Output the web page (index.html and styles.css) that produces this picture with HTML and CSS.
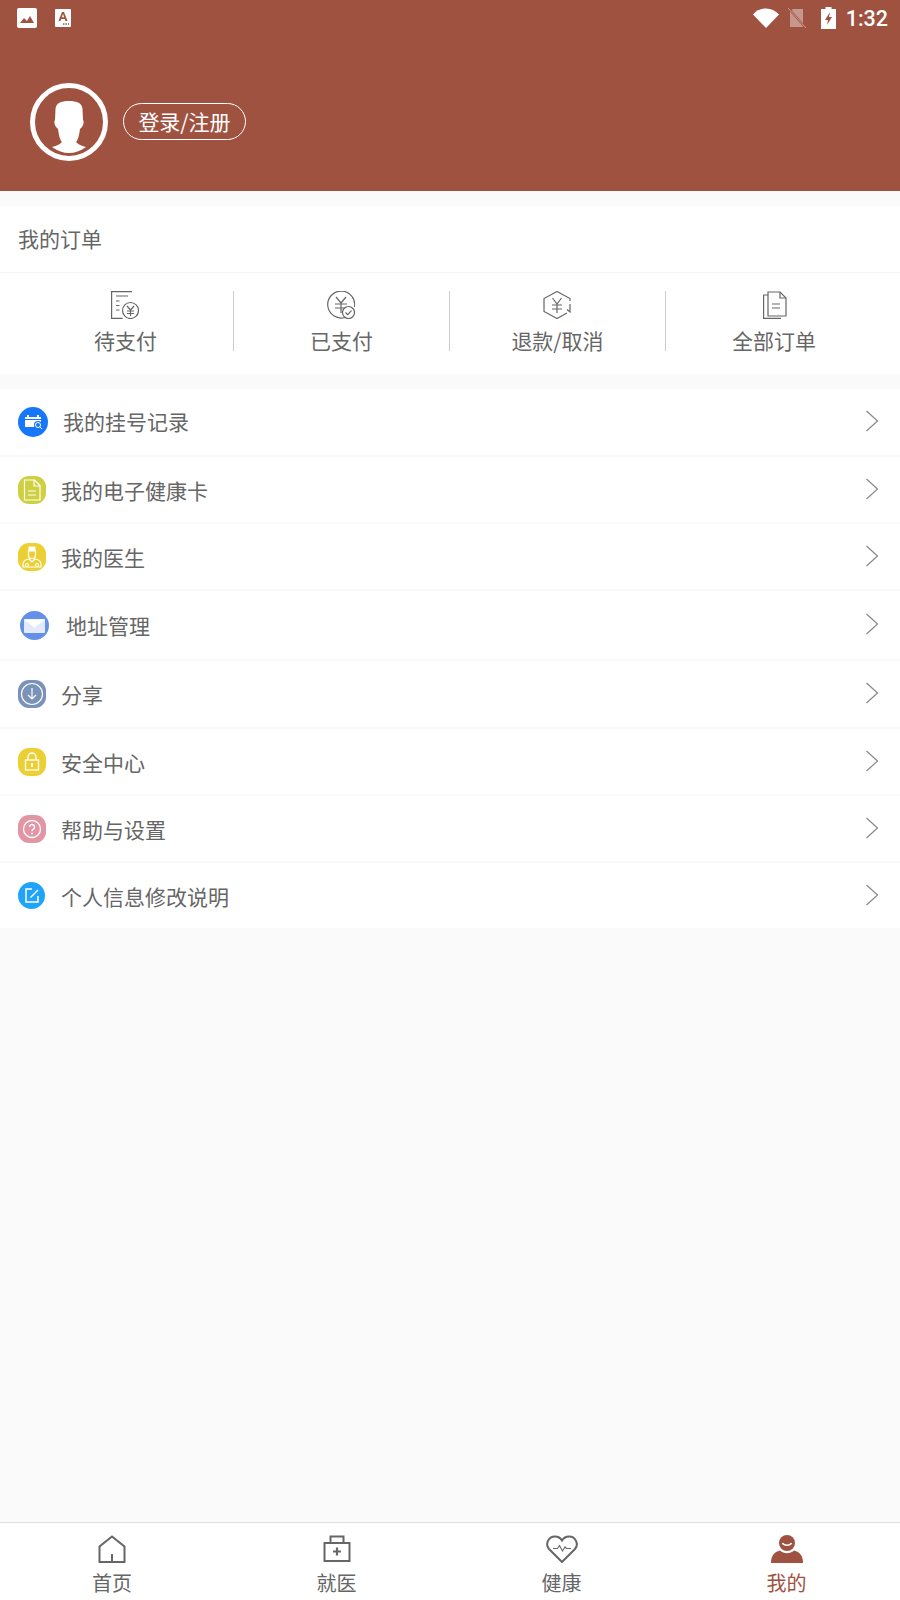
FILE: index.html
```html
<!DOCTYPE html>
<html lang="zh-CN">
<head>
    <meta charset="UTF-8">
    <title>我的</title>
    <link rel="stylesheet" href="styles.css">
</head>
<body class="page">
<header class="header">
    <div class="status-bar">
        <svg class="status-image" viewBox="0 0 20 20"><rect width="20" height="20" rx="2" fill="#fff"/><path d="M3 15l4-5 3 3 3-5 4 7z" fill="#a05241"/></svg>
        <svg class="status-font" viewBox="0 0 16 18"><rect width="16" height="18" rx="1" fill="#fff"/><path d="M3.500 12L7 3h2l3.500 9h-2l-.7-2H6.200l-.7 2zM6.800 8.300h2.400L8 5z" fill="#a05241"/><path d="M8 15h1.500M10.500 15H12M13 15h1" stroke="#a05241" stroke-width="1.500"/></svg>
        <span class="status-spacer"></span>
        <svg class="status-wifi" viewBox="0 0 26 20"><path d="M0 6.500C3.500 2.500 8 .5 13 .5s9.500 2 13 6L13 20z" fill="#fff"/></svg>
        <svg class="status-sim" viewBox="0 0 18 20"><path d="M2 3v16h13V1H5z" fill="#fff" opacity=".4"/><path d="M1 1l16 18" stroke="#a05241" stroke-width="2"/><path d="M0 0l18 20" stroke="#fff" stroke-width="1" opacity=".4"/></svg>
        <svg class="status-battery" viewBox="0 0 15 22"><path d="M4.500 0h6v2H15v20H0V2h4.500z" fill="#fff"/><path d="M9 5L4 13h3l-1 5 5-8H8z" fill="#a05241"/></svg>
        <span class="status-time">1:32</span>
    </div>
    <div class="profile">
        <svg class="avatar" viewBox="0 0 78 78">
            <circle cx="39" cy="39" r="36.500" fill="none" stroke="#fff" stroke-width="5"/>
            <path d="M39 18C47 18 52 20 52.500 26L53 37C54 38 54 41 52 44L50 46C49 53 48 57 46 59C49 62 52 63 56 64C50 68 45 70 39 70C33 70 28 68 22 64C26 63 29 62 32 59C30 57 29 53 28 46L26 44C24 41 24 38 25 37L25.500 26C26 20 31 18 39 18Z" fill="#fff"/>
        </svg>
        <a class="login-btn">登录/注册</a>
    </div>
</header>

<section class="orders">
    <div class="orders-title">我的订单</div>
    <div class="orders-row">
        <div class="order-item">
            <svg class="order-icon" viewBox="0 0 28 28" fill="none" stroke="#666" stroke-width="1.200">
                <path d="M21 .6H.6v26.800h11"/><path d="M5 5h12M5 10h3.500M5 14.500h3.500M5 19h3.500"/>
                <circle cx="19.500" cy="19.500" r="8"/><path d="M16 15l3.500 4 3.500-4M19.500 19v6M16 20h7M16 22.500h7"/>
            </svg>
            <span class="order-label">待支付</span>
        </div>
        <div class="order-item">
            <svg class="order-icon" viewBox="0 0 28 28" fill="none" stroke="#666" stroke-width="1.200">
                <path d="M18 26.500A13.500 13.500 0 1 1 27.500 16"/>
                <path d="M9 6l5 6 5-6M14 12v10M8 13h12M8 17h12"/>
                <circle cx="21.500" cy="21.500" r="6" fill="#fff"/><path d="M18.500 21.500l2.200 2.200 3.800-4"/>
            </svg>
            <span class="order-label">已支付</span>
        </div>
        <div class="order-item">
            <svg class="order-icon" viewBox="0 0 28 28" fill="none" stroke="#666" stroke-width="1.200">
                <path d="M27 10V7.500L14 .5 1 7.500v13l13 7 10-5.500"/>
                <path d="M27 13v8l-3-2.500"/>
                <path d="M9.500 7l4.500 6 4.500-6M14 13v9M9 14h10M9 18h10"/>
            </svg>
            <span class="order-label">退款/取消</span>
        </div>
        <div class="order-item order-item-last">
            <svg class="order-icon" viewBox="0 0 28 28" fill="none" stroke="#666" stroke-width="1.200">
                <path d="M9 1h12l6 6v18H9z"/><path d="M21 1v6h6"/>
                <path d="M9 4H4.600v23.400H22"/>
                <path d="M13 13h8M13 17h8"/>
            </svg>
            <span class="order-label">全部订单</span>
        </div>
    </div>
</section>

<section class="menu">
    <a class="menu-row menu-row-mid">
        <svg class="menu-icon menu-icon-lg" viewBox="0 0 30 30"><circle cx="15" cy="15" r="15" fill="#1677fa"/><path d="M7 10h16v10H7z" fill="#fff"/><path d="M10 8v3M20 8v3" stroke="#fff" stroke-width="2"/><path d="M7 12.500h16" stroke="#1677fa"/><circle cx="20" cy="18" r="4" fill="#1677fa"/><circle cx="20" cy="18" r="2.500" fill="none" stroke="#fff"/><path d="M22 20l2 2" stroke="#fff"/></svg>
        <span class="menu-text menu-text-first">我的挂号记录</span>
        <svg class="chevron" viewBox="0 0 14 22"><path d="M1.500 1l11 10-11 10" fill="none" stroke="#888" stroke-width="1.200"/></svg>
    </a>
    <a class="menu-row">
        <svg class="menu-icon" viewBox="0 0 28 28"><rect width="28" height="28" rx="11" fill="#cfd03f"/><g fill="none" stroke="#fff" stroke-width="1.200"><path d="M6.500 4h10L22 9.500V24H6.500z"/><path d="M16 4v6h6M10 15h8M10 19h8"/></g></svg>
        <span class="menu-text">我的电子健康卡</span>
        <svg class="chevron" viewBox="0 0 14 22"><path d="M1.500 1l11 10-11 10" fill="none" stroke="#888" stroke-width="1.200"/></svg>
    </a>
    <a class="menu-row">
        <svg class="menu-icon" viewBox="0 0 28 28"><rect width="28" height="28" rx="11" fill="#ecd033"/><g fill="none" stroke="#fff" stroke-width="1.200"><path d="M10.500 8v4a3.500 3.500 0 0 0 7 0V8z"/><path d="M5 24v-3c0-3 3-4.500 6-5l3 3 3-3c3 .5 6 2 6 5v3z"/><circle cx="9" cy="22" r="1.500"/><circle cx="19" cy="22" r="1.500"/></g><path d="M10.500 3.500h7V8h-7z" fill="#fff"/></svg>
        <span class="menu-text">我的医生</span>
        <svg class="chevron" viewBox="0 0 14 22"><path d="M1.500 1l11 10-11 10" fill="none" stroke="#888" stroke-width="1.200"/></svg>
    </a>
    <a class="menu-row menu-row-tall">
        <svg class="menu-icon menu-icon-mail" viewBox="0 0 29 29"><circle cx="14.500" cy="14.500" r="14.500" fill="#6590e8"/><rect x="4" y="8" width="21" height="14" rx="1" fill="#e3eafb"/><path d="M4 8.500l10.500 8 10.500-8z" fill="#fff"/></svg>
        <span class="menu-text menu-text-mail">地址管理</span>
        <svg class="chevron" viewBox="0 0 14 22"><path d="M1.500 1l11 10-11 10" fill="none" stroke="#888" stroke-width="1.200"/></svg>
    </a>
    <a class="menu-row menu-row-mid">
        <svg class="menu-icon" viewBox="0 0 28 28"><rect width="28" height="28" rx="11" fill="#7a91b8"/><g fill="none" stroke="#fff" stroke-width="1.200"><circle cx="14" cy="14" r="10.500"/><path d="M14 8v11M10 15l4 4 4-4"/></g></svg>
        <span class="menu-text">分享</span>
        <svg class="chevron" viewBox="0 0 14 22"><path d="M1.500 1l11 10-11 10" fill="none" stroke="#888" stroke-width="1.200"/></svg>
    </a>
    <a class="menu-row">
        <svg class="menu-icon" viewBox="0 0 28 28"><rect width="28" height="28" rx="11" fill="#ecd033"/><g fill="none" stroke="#fff" stroke-width="1.300"><rect x="7.500" y="12" width="13" height="10"/><path d="M10 12V9a4 4 0 0 1 8 0v3"/></g><rect x="13" y="15" width="2" height="4" fill="#fff"/></svg>
        <span class="menu-text">安全中心</span>
        <svg class="chevron" viewBox="0 0 14 22"><path d="M1.500 1l11 10-11 10" fill="none" stroke="#888" stroke-width="1.200"/></svg>
    </a>
    <a class="menu-row">
        <svg class="menu-icon" viewBox="0 0 28 28"><rect width="28" height="28" rx="11" fill="#e295a5"/><circle cx="14" cy="14" r="8.500" fill="none" stroke="#fff" stroke-width="1.300"/><path d="M11.500 12a2.500 2.500 0 1 1 4 2c-1 .7-1.500 1.200-1.500 2.200" fill="none" stroke="#fff" stroke-width="1.500"/><circle cx="14" cy="18.500" r="1" fill="#fff"/></svg>
        <span class="menu-text">帮助与设置</span>
        <svg class="chevron" viewBox="0 0 14 22"><path d="M1.500 1l11 10-11 10" fill="none" stroke="#888" stroke-width="1.200"/></svg>
    </a>
    <a class="menu-row menu-row-last">
        <svg class="menu-icon menu-icon-edit" viewBox="0 0 27 27"><circle cx="13.500" cy="13.500" r="13.500" fill="#1fa3fb"/><g fill="none" stroke="#fff" stroke-width="1.500"><path d="M14 7H8v13h12v-6"/><path d="M12.500 15.500L20 8"/></g></svg>
        <span class="menu-text menu-text-edit">个人信息修改说明</span>
        <svg class="chevron" viewBox="0 0 14 22"><path d="M1.500 1l11 10-11 10" fill="none" stroke="#888" stroke-width="1.200"/></svg>
    </a>
</section>

<div class="spacer"></div>

<nav class="tabbar">
    <a class="tab">
        <svg class="tab-icon" viewBox="0 0 28 28" fill="none" stroke="#666" stroke-width="2"><path d="M14 1.500L1.500 11.500V27h25V11.500zM14 19v8"/></svg>
        <span>首页</span>
    </a>
    <a class="tab">
        <svg class="tab-icon" viewBox="0 0 28 28" fill="none" stroke="#666" stroke-width="2"><path d="M1.500 8h25v18h-25zM7.500 8V1.500h13V8"/><path d="M14 12.500v8M10 16.500h8" stroke-width="2.200"/></svg>
        <span>就医</span>
    </a>
    <a class="tab">
        <svg class="tab-icon tab-icon-wide" viewBox="0 0 32 28" fill="none" stroke="#666" stroke-width="2"><path d="M16 27L3 14C-1 9.500 2 1.500 9 1.500c3 0 5.500 1.500 7 4 1.500-2.500 4-4 7-4 7 0 10 8 6 12.500z"/><path d="M7 13.500h4.500l2-3 3 5.500 2.500-4 1.500 1.500H25" stroke-width="1.100"/></svg>
        <span>健康</span>
    </a>
    <a class="tab tab-active">
        <svg class="tab-icon tab-icon-wide" viewBox="0 0 32 28"><circle cx="16" cy="8" r="8" fill="#a05241"/><path d="M11.500 8c1.500 3 7.500 3 9 0" fill="none" stroke="#fff" stroke-width="1.600"/><path d="M0 28c0-7 3-11 9-12.500 4 3.500 10 3.500 14 0C29 17 32 21 32 28z" fill="#a05241"/></svg>
        <span>我的</span>
    </a>
</nav>
</body>
</html>
```

FILE: styles.css
```css
.page {
    margin: 0;
    min-height: 1600px;
    display: flex;
    flex-direction: column;
    background: #fafafa;
    color: #666;
    font-family: "Noto Sans CJK SC", "Noto Sans", sans-serif;
    font-size: 21px;
}

svg {
    display: block;
    flex: none;
}

/* header */
.header {
    height: 191px;
    background: #a05241;
}

.status-bar {
    height: 36px;
    display: flex;
    align-items: center;
    padding: 0 12px 0 17px;
    color: white;
}

.status-image {
    width: 20px;
    height: 20px;
}

.status-font {
    width: 16px;
    height: 18px;
    margin-left: 18px;
}

.status-spacer {
    flex: 1;
}

.status-wifi {
    width: 26px;
    height: 20px;
}

.status-sim {
    width: 18px;
    height: 20px;
    margin-left: 9px;
}

.status-battery {
    width: 15px;
    height: 22px;
    margin-left: 15px;
}

.status-time {
    margin-left: 10px;
    font-family: Roboto, sans-serif;
    font-size: 21.5px;
    font-weight: 500;
}

.profile {
    display: flex;
    align-items: center;
    margin-top: 47px;
    padding-left: 30px;
}

.avatar {
    width: 78px;
    height: 78px;
}

.login-btn {
    margin: 0 0 2px 15px;
    width: 123px;
    height: 37px;
    box-sizing: border-box;
    border: 1px solid white;
    border-radius: 19px;
    display: flex;
    align-items: center;
    justify-content: center;
    color: white;
}

/* orders */
.orders {
    margin-top: 15px;
    background: white;
}

.orders-title {
    height: 64px;
    padding: 0 0 2px 18px;
    display: flex;
    align-items: center;
    border-bottom: 1px solid #f6f6f6;
}

.orders-row {
    display: grid;
    grid-template-columns: repeat(4, 216px);
    height: 101px;
    padding: 18px 0 0 18px;
    box-sizing: border-box;
}

.order-item {
    height: 60px;
    display: flex;
    flex-direction: column;
    align-items: center;
    border-right: 1px solid #ccc;
}

.order-item-last {
    border-right: 0;
}

.order-icon {
    width: 28px;
    height: 28px;
    margin-right: 2px;
}

.order-label {
    margin-top: 6px;
    line-height: 30px;
}

/* menu */
.menu {
    margin-top: 15px;
    background: white;
}

.menu-row {
    height: 67px;
    box-sizing: border-box;
    display: flex;
    align-items: center;
    padding: 0 21px 0 18px;
    border-bottom: 2px solid #fafafa;
}

.menu-row-mid {
    height: 68px;
}

.menu-row-tall {
    height: 70px;
}

.menu-row-last {
    height: 65px;
    border-bottom: 0;
}

.menu-icon {
    width: 28px;
    height: 28px;
}

.menu-icon-lg {
    width: 30px;
    height: 30px;
}

.menu-icon-mail {
    width: 29px;
    height: 29px;
    margin-left: 2px;
}

.menu-icon-edit {
    width: 27px;
    height: 27px;
}

.menu-text {
    flex: 1;
    margin-left: 15px;
}

.menu-text-first {
    margin-bottom: 3px;
}

.menu-text-mail {
    margin-left: 17px;
}

.menu-text-edit {
    margin-left: 16px;
}

.chevron {
    width: 14px;
    height: 22px;
    margin-bottom: 2px;
}

.spacer {
    flex: 1;
}

/* bottom tabs */
.tabbar {
    height: 78px;
    box-sizing: border-box;
    background: white;
    border-top: 1px solid #e0e0e0;
    display: grid;
    grid-template-columns: 224px repeat(3, 225px);
    font-size: 20px;
}

.tab {
    display: flex;
    flex-direction: column;
    align-items: center;
    padding-top: 12px;
}

.tab-icon {
    width: 28px;
    height: 28px;
}

.tab-icon-wide {
    width: 32px;
}

.tab span {
    margin-top: 5px;
    line-height: 30px;
}

.tab-active {
    color: #a05241;
}
```
